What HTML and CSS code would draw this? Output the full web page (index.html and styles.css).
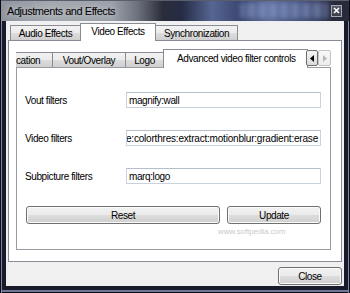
FILE: index.html
```html
<!DOCTYPE html>
<html>
<head>
<meta charset="utf-8">
<title>Adjustments and Effects</title>
<link rel="stylesheet" href="styles.css">
</head>
<body>
<div class="window">
  <div class="titlebar">
    <span class="title">Adjustments and Effects</span>
    <span class="tb-glow"></span>
    <span class="close-x"><svg width="7" height="7" viewBox="0 0 7 7"><path d="M1 1L6 6M6 1L1 6" stroke="#fff" stroke-width="1.6"/></svg></span>
  </div>
  <div class="client">
    <div class="tabwidget">
      <div class="tabs">
        <div class="tab w-audio">Audio Effects</div>
        <div class="tab sel w-video">Video Effects</div>
        <div class="tab w-sync">Synchronization</div>
      </div>
      <div class="pane">
        <div class="itabs">
          <div class="itab clipped">cation</div>
          <div class="itab w-vout">Vout/Overlay</div>
          <div class="itab w-logo">Logo</div>
          <div class="itab sel w-adv">Advanced video filter controls</div>
          <div class="scroller">
            <span class="arr"><svg width="4" height="7" viewBox="0 0 4 7"><path d="M4 0L0 3.5L4 7Z" fill="#000"/></svg></span>
            <span class="arr dis"><svg width="4" height="7" viewBox="0 0 4 7"><path d="M0 0L4 3.5L0 7Z" fill="#b8b8b8"/></svg></span>
          </div>
        </div>
        <div class="ipane">
          <div class="form">
            <span class="lbl">Vout filters</span>
            <div class="field">magnify:wall</div>
            <span class="lbl">Video filters</span>
            <div class="field end"><span>e:colorthres:extract:motionblur:gradient:erase</span></div>
            <span class="lbl">Subpicture filters</span>
            <div class="field">marq:logo</div>
          </div>
          <div class="btnrow">
            <button class="btn reset">Reset</button>
            <button class="btn update">Update</button>
          </div>
        </div>
      </div>
    </div>
    <div class="footer">
      <button class="btn close">Close</button>
    </div>
  </div>
  <div class="wm-url">www.softpedia.com</div>
</div>
</body>
</html>
```
FILE: styles.css
```css
html, body {
  margin: 0;
  padding: 0;
}
body {
  font-family: "Liberation Sans", Arial, sans-serif;
  font-size: 10px;
  letter-spacing: -0.4px;
  color: #000;
}
.window {
  position: relative;
  width: 350px;
  height: 293px;
  display: flex;
  flex-direction: column;
  background: #191b2c;
  box-shadow: inset 1px 0 0 #0b0c16, inset 2px 0 0 #7e86a2,
              inset -1px 0 0 #0b0c16, inset -2px 0 0 #7e86a2,
              inset 0 -1px 0 #0b0c16, inset 0 -3px 0 #6e7692;
  overflow: hidden;
}
.titlebar {
  position: relative;
  flex: none;
  height: 21px;
  display: flex;
  align-items: center;
  padding: 0 8px 0 7px;
  background: linear-gradient(to right, #8f949c 0px, #a4a8b0 50px, #9ca0a8 112px, #6c707c 138px, #2a2c3a 163px, #262c46 182px, #566592 212px, #3b4670 240px, #5d6c98 268px, #4a5782 296px, #3a4062 320px, #282a3a 334px, #282a3a 350px);
  box-shadow: inset 1px 0 0 #0b0c16, inset -1px 0 0 #0b0c16, inset 0 1px 0 #5a5e6c;
}
.title {
  position: relative;
  z-index: 1;
  font-size: 11px;
  letter-spacing: -0.45px;
  color: #000;
  text-shadow: 0 0 6px rgba(235, 237, 240, 0.9);
}
.tb-glow {
  position: absolute;
  left: 240px;
  top: 3px;
  width: 88px;
  height: 15px;
  background: repeating-linear-gradient(to right, rgba(150, 170, 220, 0.55) 0px, rgba(150, 170, 220, 0.15) 6px, rgba(150, 170, 220, 0.55) 11px);
  filter: blur(2px);
}
.close-x {
  position: relative;
  z-index: 1;
  margin-left: auto;
  width: 11px;
  height: 12px;
  box-sizing: border-box;
  border: 1px solid #a4a8b4;
  background: linear-gradient(#5a5e6c, #3a3d4a);
  display: flex;
  align-items: center;
  justify-content: center;
}
.client {
  flex: 1;
  margin: 0 6px 7px;
  background: #f0f0f0;
  display: flex;
  flex-direction: column;
  padding: 2px 2px 1px 2px;
  min-height: 0;
}
.tabwidget {
  height: 239px;
  display: flex;
  flex-direction: column;
}
.tabs {
  height: 17px;
  display: flex;
  align-items: flex-start;
  padding-left: 2px;
  flex: none;
}
.tab {
  box-sizing: border-box;
  height: 15px;
  margin-top: 2px;
  border: 1px solid #898c95;
  border-bottom: none;
  background: linear-gradient(#f2f2f2 0%, #ebebeb 50%, #dddddd 51%, #cfcfcf 100%);
  display: flex;
  align-items: center;
  justify-content: center;
  white-space: nowrap;
  margin-left: -1px;
}
.tab:first-child { margin-left: 0; }
.tab.sel {
  position: relative;
  z-index: 2;
  height: 18px;
  margin-top: 0;
  background: #fff;
  padding-bottom: 2px;
}
.w-audio { width: 71px; }
.w-video { width: 76px; }
.w-sync { width: 83px; }
.pane {
  flex: 1;
  border: 1px solid #898c95;
  background: #fff;
  padding: 8px 10px 11px 7px;
  display: flex;
  flex-direction: column;
  min-height: 0;
}
.itabs {
  position: relative;
  height: 18px;
  flex: none;
  display: flex;
  align-items: flex-start;
}
.itab {
  box-sizing: border-box;
  height: 15px;
  margin-top: 3px;
  border: 1px solid #898c95;
  border-bottom: none;
  background: linear-gradient(#f2f2f2 0%, #ebebeb 50%, #dddddd 51%, #cfcfcf 100%);
  display: flex;
  align-items: center;
  justify-content: center;
  white-space: nowrap;
  margin-left: -1px;
  flex: none;
}
.itab.clipped {
  margin-left: 0;
  width: 37px;
  border-left: none;
  justify-content: flex-start;
  padding-left: 0;
}
.itab.sel {
  position: relative;
  z-index: 2;
  height: 19px;
  margin-top: 0;
  background: #fff;
  padding-bottom: 2px;
}
.w-vout { width: 74px; }
.w-logo { width: 39px; }
.w-adv { width: 145px; justify-content: flex-start; padding-left: 13px; }
.scroller {
  position: absolute;
  right: 0;
  top: 1px;
  z-index: 3;
  display: flex;
  background: #fff;
}
.arr {
  box-sizing: border-box;
  width: 12px;
  height: 16px;
  border: 1px solid #6e6e6e;
  border-radius: 2px;
  background: linear-gradient(#f4f4f4, #dadada);
  display: flex;
  align-items: center;
  justify-content: center;
}
.arr.dis {
  width: 13px;
  border-color: #c4c4c4;
  background: linear-gradient(#f8f8f8, #ececec);
}
.ipane {
  height: 183px;
  box-sizing: border-box;
  border: 1px solid #9a9ca4;
  background: #fff;
  padding: 24px 9px 0 8px;
  display: flex;
  flex-direction: column;
}
.form {
  display: grid;
  grid-template-columns: 101px 1fr;
  row-gap: 22px;
  align-items: center;
}
.lbl {
  white-space: nowrap;
}
.field {
  box-sizing: border-box;
  height: 16px;
  border: 1px solid #c9d2de;
  border-top-color: #b5bfcc;
  background: #fff;
  padding: 0 2px;
  display: flex;
  align-items: center;
  white-space: nowrap;
  overflow: hidden;
}
.field.end {
  justify-content: flex-end;
  letter-spacing: -0.2px;
}
.field.end span { flex: none; }
.btnrow {
  display: flex;
  margin-top: 22px;
  padding-left: 1px;
  gap: 7px;
}
.btn {
  box-sizing: border-box;
  height: 18px;
  border: 1px solid #707070;
  border-radius: 3px;
  background: linear-gradient(#f2f2f2 0%, #ebebeb 50%, #dddddd 51%, #cfcfcf 100%);
  box-shadow: inset 0 0 0 1px #fbfbfb;
  font-family: "Liberation Sans", Arial, sans-serif;
  font-size: 10px;
  letter-spacing: -0.4px;
  color: #000;
  padding: 0;
  margin: 0;
}
.reset { width: 194px; }
.update { width: 94px; }
.footer {
  margin-top: 5px;
  height: 18px;
  display: flex;
  justify-content: flex-end;
  flex: none;
}
.close { width: 64px; }
.wm-url {
  position: absolute;
  left: 218px;
  top: 227px;
  font-size: 8px;
  letter-spacing: -0.1px;
  color: rgba(185, 185, 185, 0.8);
  pointer-events: none;
}
```
